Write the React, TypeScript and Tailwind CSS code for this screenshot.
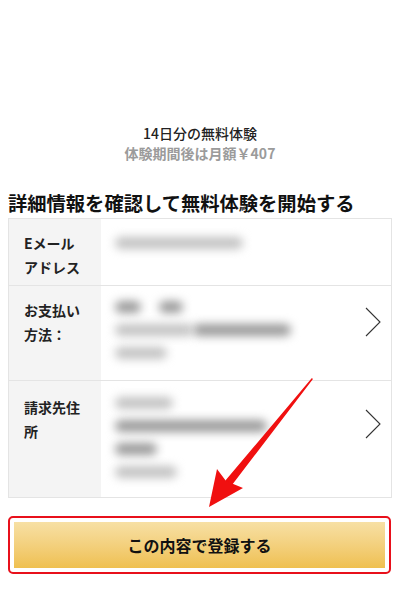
import React from 'react';

const font = { fontFamily: '"Noto Sans CJK JP", "Noto Sans", sans-serif' };

function Blur({ w, ml = 0, dark = false }: { w: number; ml?: number; dark?: boolean }) {
  return (
    <div
      className={`h-[12px] rounded-full blur-[5px] ${dark ? 'bg-[#999]' : 'bg-[#c2c2c2]'}`}
      style={{ width: w, marginLeft: ml }}
    />
  );
}

function Chevron() {
  return (
    <svg width="16" height="30" viewBox="0 0 16 30" className="shrink-0">
      <path d="M1 1 L15 15 L1 29" fill="none" stroke="#333" strokeWidth="1.1" />
    </svg>
  );
}

export default function App() {
  return (
    <div className="relative w-[400px] h-[589px] bg-white overflow-hidden text-[#222]" style={font}>
      {/* Trial summary */}
      <div className="pt-[123px] text-center">
        <p className="text-[14px] leading-[20px] font-medium text-[#222]">14日分の無料体験</p>
        <p className="text-[14px] leading-[20px] font-bold text-[#9b9b9b]">体験期間後は月額￥407</p>
      </div>

      <h2 className="mt-[28px] px-[8px] text-[19.3px] leading-[24px] font-bold text-[#111]">
        詳細情報を確認して無料体験を開始する
      </h2>

      {/* Details table */}
      <div className="mt-[3px] mx-[8px] w-[384px] border border-[#e4e4e4]">
        <div className="flex h-[67px] border-b border-[#e4e4e4]">
          <div className="w-[92px] bg-[#f4f4f4] pl-[15px] pt-[12px] text-[14px] leading-[24px] font-semibold">
            Eメール<br />アドレス
          </div>
          <div className="flex-1 pl-[14px] pt-[18px]">
            <Blur w={128} />
          </div>
        </div>

        <div className="flex h-[95px] border-b border-[#e4e4e4]">
          <div className="w-[92px] bg-[#f4f4f4] pl-[15px] pt-[12px] text-[14px] leading-[24px] font-semibold">
            お支払い<br />方法：
          </div>
          <div className="flex-1 flex items-start pl-[14px] pr-[10px] pt-[15px]">
            <div className="flex-1 flex flex-col gap-[11px]">
              <div className="flex">
                <Blur w={26} dark />
                <Blur w={24} ml={18} dark />
              </div>
              <div className="flex">
                <Blur w={78} />
                <Blur w={98} ml={0} dark />
              </div>
              <Blur w={52} />
            </div>
            <div className="mt-[6px]">
              <Chevron />
            </div>
          </div>
        </div>

        <div className="flex h-[116px]">
          <div className="w-[92px] bg-[#f4f4f4] pl-[15px] pt-[14px] text-[14px] leading-[24px] font-semibold">
            請求先住<br />所
          </div>
          <div className="flex-1 flex items-start pl-[14px] pr-[10px] pt-[16px]">
            <div className="flex-1 flex flex-col gap-[11px]">
              <Blur w={58} />
              <Blur w={152} dark />
              <Blur w={42} dark />
              <Blur w={62} />
            </div>
            <div className="mt-[12px]">
              <Chevron />
            </div>
          </div>
        </div>
      </div>

      {/* Submit button */}
      <div className="mt-[18px] mx-[8px] w-[383px] rounded-[5px] border-[2.5px] border-[#e8101b] p-[4px]">
        <button className="w-full h-[46px] bg-gradient-to-b from-[#f7e0a4] to-[#efc04f] text-[16px] font-bold text-[#111]">
          この内容で登録する
        </button>
      </div>

      {/* Red annotation arrow */}
      <svg className="absolute left-0 top-0 pointer-events-none" width="400" height="589">
        <path d="M312 379 L226 481 L231 485 Z" fill="#f01010" stroke="#f01010" strokeWidth="1.5" strokeLinejoin="round" />
        <path d="M209 507 L217 469 L226 481 L243 488 Z" fill="#f01010" />
      </svg>
    </div>
  );
}
